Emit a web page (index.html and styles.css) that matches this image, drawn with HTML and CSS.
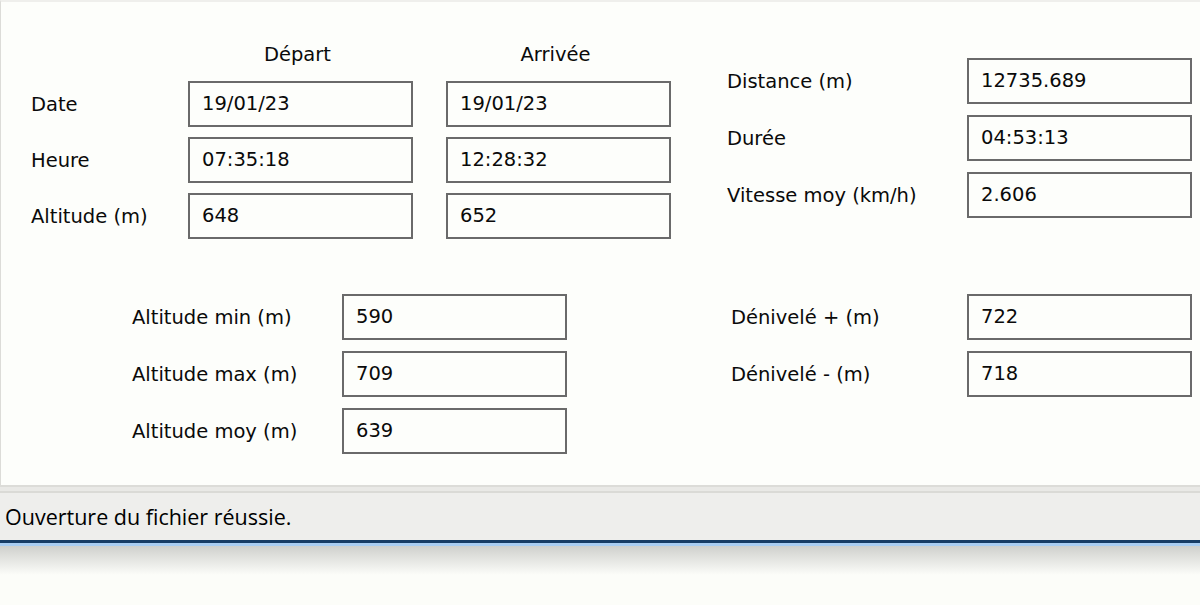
FILE: index.html
```html
<!DOCTYPE html>
<html lang="fr">
<head>
  <meta charset="UTF-8" />
  <title>Résumé du parcours</title>
  <link rel="stylesheet" href="styles.css">
</head>
<body>
  <!-- Panneau des statistiques -->
  <div class="panel">
    <div class="top">
      <div class="grid grid-times">
        <span></span>
        <span class="col-head">Départ</span>
        <span class="col-head">Arrivée</span>

        <span class="label">Date</span>
        <div class="field">19/01/23</div>
        <div class="field">19/01/23</div>

        <span class="label">Heure</span>
        <div class="field">07:35:18</div>
        <div class="field">12:28:32</div>

        <span class="label">Altitude (m)</span>
        <div class="field">648</div>
        <div class="field">652</div>
      </div>

      <div class="grid grid-totals">
        <span class="label">Distance (m)</span>
        <div class="field">12735.689</div>
        <span class="label">Durée</span>
        <div class="field">04:53:13</div>
        <span class="label">Vitesse moy (km/h)</span>
        <div class="field">2.606</div>
      </div>
    </div>

    <div class="bottom">
      <div class="grid grid-alt">
        <span class="label">Altitude min (m)</span>
        <div class="field">590</div>
        <span class="label">Altitude max (m)</span>
        <div class="field">709</div>
        <span class="label">Altitude moy (m)</span>
        <div class="field">639</div>
      </div>

      <div class="grid grid-deniv">
        <span class="label">Dénivelé + (m)</span>
        <div class="field">722</div>
        <span class="label">Dénivelé - (m)</span>
        <div class="field">718</div>
      </div>
    </div>
  </div>

  <!-- Barre d'état -->
  <div class="statusbar">Ouverture du fichier réussie.</div>
  <div class="shadow"></div>
</body>
</html>
```

FILE: styles.css
```css
/* Base */
* {
  margin: 0;
  padding: 0;
  box-sizing: border-box;
}
html, body {
  background: #fcfdf9;
  font-family: "DejaVu Sans", Verdana, sans-serif;
  color: #0a0a0a;
}
/* Panel */
.panel {
  height: 485px;
  background: #fdfefb;
  border-top: 2px solid #efefec;
  border-left: 1px solid #dcdcd8;
}
.top {
  display: flex;
  align-items: flex-start;
}
.bottom {
  display: flex;
  align-items: flex-start;
  margin-top: 55px;
}
/* Label + field grids */
.grid {
  display: grid;
  align-items: center;
  row-gap: 11px;
  font-size: 19.5px;
}
.grid-times {
  margin-left: 30px;
  margin-top: 38px;
  grid-template-columns: 124px 225px 225px;
  grid-template-rows: 31px repeat(3, 46px);
  column-gap: 33px;
  row-gap: 10px;
}
.grid-times .col-head {
  align-self: start;
  line-height: 26px;
  padding-top: 2px;
  padding-right: 6px;
  text-align: center;
}
.grid-totals {
  margin-left: auto;
  margin-right: 8px;
  margin-top: 56px;
  grid-template-columns: 240px 225px;
  grid-template-rows: repeat(3, 46px);
}
.grid-alt {
  margin-left: 131px;
  grid-template-columns: 210px 225px;
  grid-template-rows: repeat(3, 46px);
}
.grid-deniv {
  margin-left: auto;
  margin-right: 8px;
  grid-template-columns: 236px 225px;
  grid-template-rows: repeat(2, 46px);
}
.label {
  white-space: nowrap;
}
.field {
  height: 46px;
  border: 2px solid #6a6a6a;
  background: #fdfefb;
  padding: 0 12px;
  display: flex;
  align-items: center;
  padding-bottom: 2px;
}
/* Status bar */
.statusbar {
  height: 58px;
  background: #eeeeec;
  border-top: 2px solid #dcdcd8;
  box-shadow: inset 0 4px 0 #e9e9e6, inset 0 6px 0 #dadad6;
  border-bottom: 3px solid #173d66;
  font-family: "Open Sans", "Noto Sans", sans-serif;
  font-size: 21.5px;
  padding: 15px 0 0 5px;
  color: #000;
}
.shadow {
  height: 32px;
  border-top: 3px solid #a9cdf2;
  background: linear-gradient(#cfd0cd, #fcfdf9);
}
```
